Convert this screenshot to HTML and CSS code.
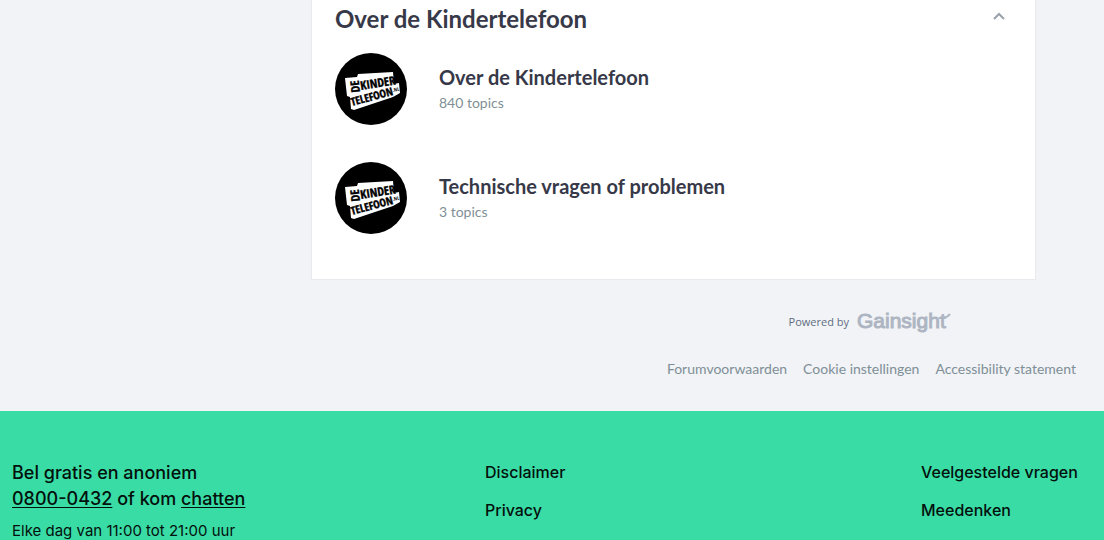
FILE: index.html
```html
<!DOCTYPE html>
<html lang="nl">
<head>
<meta charset="utf-8">
<meta name="viewport" content="width=device-width, initial-scale=1">
<title>Forum | De Kindertelefoon</title>
<link rel="stylesheet" href="styles.css">
</head>
<body>
<main class="page">
  <section class="card">
    <header class="card-header">
      <h1 class="card-title">Over de Kindertelefoon</h1>
      <button class="toggle" type="button" aria-label="Inklappen" aria-expanded="true">
        <svg width="12" height="8" viewBox="0 0 12 8" fill="none" stroke="#9aa2ab" stroke-width="2"><path d="M1 7 6 2 11 7"/></svg>
      </button>
    </header>
    <article class="topic">
      <svg class="avatar" viewBox="0 0 72 72" aria-hidden="true">
        <g id="logo">
          <circle cx="36" cy="36" r="36" fill="#000"/>
          <path fill="#fff" d="M10 25 22 24 23 21 58 19 59 31 64 30 65 40 58 44 19 57 16 56 15 44 12 43Z"/>
          <g class="logo-text" fill="#000" stroke="#000" stroke-width=".4">
            <text font-size="12" transform="translate(25 39) rotate(-96)">DE</text>
            <text font-size="12" transform="translate(26 37) rotate(-9)">KINDER</text>
            <text font-size="11" transform="translate(17 53) rotate(-15)">TELEFOON</text>
          </g>
          <text class="logo-text" fill="#000" font-size="5" transform="translate(58 39) rotate(-12)">.NL</text>
        </g>
      </svg>
      <div>
        <h2 class="topic-title">Over de Kindertelefoon</h2>
        <p class="topic-count">840 topics</p>
      </div>
    </article>
    <article class="topic">
      <svg class="avatar" viewBox="0 0 72 72" aria-hidden="true"><use href="#logo"/></svg>
      <div>
        <h2 class="topic-title">Technische vragen of problemen</h2>
        <p class="topic-count">3 topics</p>
      </div>
    </article>
  </section>
  <div class="powered">
    <span>Powered by</span>
    <svg class="gainsight" width="94" height="24" viewBox="0 0 94 24" role="img" aria-label="Gainsight">
      <text x="0" y="18">Gainsight</text>
      <path d="M82 8H86Q91 7 93 4" fill="none" stroke="#aeb5c2" stroke-width="2"/>
    </svg>
  </div>
  <nav class="legal">
    <a href="#">Forumvoorwaarden</a>
    <a href="#">Cookie instellingen</a>
    <a href="#">Accessibility statement</a>
  </nav>
</main>
<footer class="footer">
  <div>
    <p class="contact">Bel gratis en anoniem<br><a href="tel:08000432">0800-0432</a> of kom <a href="#">chatten</a></p>
    <p class="hours">Elke dag van 11:00 tot 21:00 uur</p>
  </div>
  <nav class="footer-links"><a href="#">Disclaimer</a><a href="#">Privacy</a></nav>
  <nav class="footer-links"><a href="#">Veelgestelde vragen</a><a href="#">Meedenken</a></nav>
</footer>
</body>
</html>
```
FILE: styles.css
```css
* { box-sizing: border-box; }
body { margin: 0; background: #f1f3f7; font-family: Lato, sans-serif; color: #373948; }
h1, h2, p { margin: 0; }
a { color: inherit; text-decoration: none; }
.page { padding: 0 28px 31px; }
.card { margin: 0 40px 0 27%; padding: 0 24px 45px 23px; background: #fff; border: 1px solid #e7e9ec; border-top: 0; }
.card-header { display: flex; align-items: center; justify-content: space-between; height: 38px; }
.card-title { font-size: 24px; line-height: 38px; font-weight: 700; }
.toggle { display: flex; padding: 3px 6px 9px; border: 0; background: none; }
.topic { display: flex; align-items: center; gap: 32px; margin-top: 15px; }
.topic + .topic { margin-top: 37px; }
.avatar { width: 72px; height: 72px; flex: none; }
.logo-text { font-family: "Liberation Sans Narrow", "Open Sans Condensed", "Roboto Condensed", "Liberation Sans", sans-serif; font-weight: 700; }
.topic-title { font-size: 20px; line-height: 24px; font-weight: 700; }
.topic-count { margin-top: 3px; font-size: 14px; line-height: 22px; color: #7f8f96; }
.powered { display: flex; align-items: center; justify-content: flex-end; gap: 8px; margin: 30px 125px 0 0; font: 11px/24px "Open Sans", sans-serif; color: #5f6d80; }
.gainsight text { font: 21px "Liberation Sans", sans-serif; fill: #aeb5c2; stroke: #aeb5c2; stroke-width: 1px; }
.legal { display: flex; justify-content: flex-end; gap: 16px; margin-top: 24px; font-size: 14px; line-height: 22px; color: #7f8f96; }
.footer { display: grid; grid-template-columns: 473fr 436fr 171fr; padding: 49px 12px 0; background: #3adca5; color: #03100c; font-family: Inter, sans-serif; }
.contact { font-size: 18px; line-height: 26px; font-weight: 500; }
.contact a { text-decoration: underline; text-underline-offset: 2px; }
.hours { margin-top: 9px; font-size: 15px; line-height: 20px; }
.footer-links { display: flex; flex-direction: column; align-items: flex-start; gap: 14px; font-size: 16px; line-height: 24px; font-weight: 500; white-space: nowrap; }
```
